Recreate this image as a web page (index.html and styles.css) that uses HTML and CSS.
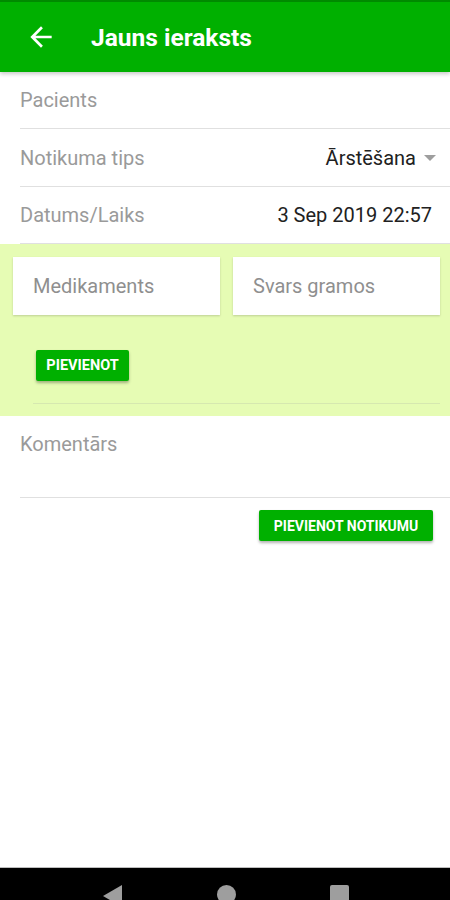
FILE: index.html
```html
<!DOCTYPE html>
<html lang="lv">
<head>
<meta charset="utf-8">
<title>Jauns ieraksts</title>
<link rel="stylesheet" href="styles.css">
</head>
<body>
<div class="screen">
  <header class="toolbar">
    <svg class="back" width="32" height="32" viewBox="0 0 24 24"><path d="M20 11H7.83l5.59-5.59L12 4l-8 8 8 8 1.41-1.41L7.83 13H20v-2z" fill="#fff"/></svg>
    <h1 class="title">Jauns ieraksts</h1>
  </header>

  <div class="row row-a"><span class="label">Pacients</span></div>
  <div class="row row-b"><span class="label">Notikuma tips</span><span class="value">Ārstēšana<span class="caret"></span></span></div>
  <div class="row row-c"><span class="label">Datums/Laiks</span><span class="value">3 Sep 2019 22:57</span></div>

  <section class="meds">
    <div class="cards">
      <div class="card">Medikaments</div>
      <div class="card">Svars gramos</div>
    </div>
    <div class="add-wrap"><button class="btn">PIEVIENOT</button></div>
    <div class="meds-divider"></div>
  </section>

  <div class="comment"><span class="label">Komentārs</span></div>

  <div class="submit-row"><button class="btn btn-wide">PIEVIENOT NOTIKUMU</button></div>

  <div class="spacer"></div>

  <nav class="navbar">
    <span class="nav-back"></span>
    <span class="nav-home"></span>
    <span class="nav-recent"></span>
  </nav>
</div>
</body>
</html>
```
FILE: styles.css
```css
* { box-sizing: border-box; }
html, body { margin: 0; padding: 0; }
body {
  font-family: Roboto, "Noto Sans", "Liberation Sans", sans-serif;
  background: #fff;
}
.screen {
  width: 450px;
  height: 900px;
  display: flex;
  flex-direction: column;
  overflow: hidden;
}
.toolbar {
  height: 72px;
  flex: none;
  background: #00b000;
  border-top: 2px solid #008a00;
  display: flex;
  align-items: center;
  padding-left: 25px;
  gap: 34px;
  box-shadow: 0 2px 4px rgba(0,0,0,0.22);
  position: relative;
  z-index: 1;
}
.back { flex: none; }
.title {
  margin: 0;
  color: #fff;
  font-size: 24.5px;
  font-weight: 700;
}
.row {
  flex: none;
  margin-left: 20px;
  border-bottom: 1px solid #e0e0e0;
  display: flex;
  align-items: center;
  justify-content: space-between;
}
.row-a { height: 57px; }
.row-b { height: 58px; padding-right: 14px; }
.row-c { height: 57px; padding-right: 18px; }
.label {
  font-size: 20px;
  color: #9a9a9a;
}
.value {
  font-size: 20px;
  color: #212121;
  display: flex;
  align-items: center;
}
.caret {
  width: 0; height: 0;
  border-left: 6px solid transparent;
  border-right: 6px solid transparent;
  border-top: 6px solid #9e9e9e;
  margin-left: 8px;
}

.meds {
  flex: none;
  background: #e6fcb4;
  padding: 13px 10px 13px 13px;
  height: 172px;
}
.cards {
  display: flex;
  gap: 13px;
}
.card {
  flex: 1;
  height: 58px;
  background: #fff;
  box-shadow: 0 1px 2px rgba(0,0,0,0.18);
  font-size: 20px;
  color: #8f8f8f;
  padding: 0 20px;
  display: flex;
  align-items: center;
}
.add-wrap {
  padding: 35px 0 0 23px;
  height: 88px;
}
.btn {
  font-family: Roboto, "Noto Sans", "Liberation Sans", sans-serif;
  background: #00b000;
  color: #fff;
  border: none;
  border-radius: 2px;
  font-size: 14.5px;
  font-weight: 700;
  height: 31px;
  width: 93px;
  padding: 0;
  box-shadow: 0 2px 3px rgba(0,0,0,0.3);
}
.meds-divider {
  margin-left: 20px;
  border-top: 1px solid #d6e8b0;
}
.comment {
  flex: none;
  height: 82px;
  margin-left: 20px;
  border-bottom: 1px solid #e0e0e0;
  padding-top: 16px;
}
.submit-row {
  flex: none;
  display: flex;
  justify-content: flex-end;
  padding: 12px 17px 0 0;
}
.btn-wide {
  width: 174px;
  height: 31px;
  font-size: 14px;
}
.spacer { flex: 1; }
.navbar {
  flex: none;
  height: 33px;
  background: #000;
  border-top: 1px solid #bdbdbd;
  display: flex;
  align-items: flex-start;
  padding-top: 17px;
}
.nav-back {
  margin-left: 103px;
  width: 0; height: 0;
  border-top: 11px solid transparent;
  border-bottom: 11px solid transparent;
  border-right: 19px solid #9e9e9e;
}
.nav-home {
  margin-left: 95px;
  width: 19px; height: 19px;
  border-radius: 50%;
  background: #9e9e9e;
}
.nav-recent {
  margin-left: 94px;
  width: 19px; height: 19px;
  border-radius: 2px;
  background: #9e9e9e;
}
```
